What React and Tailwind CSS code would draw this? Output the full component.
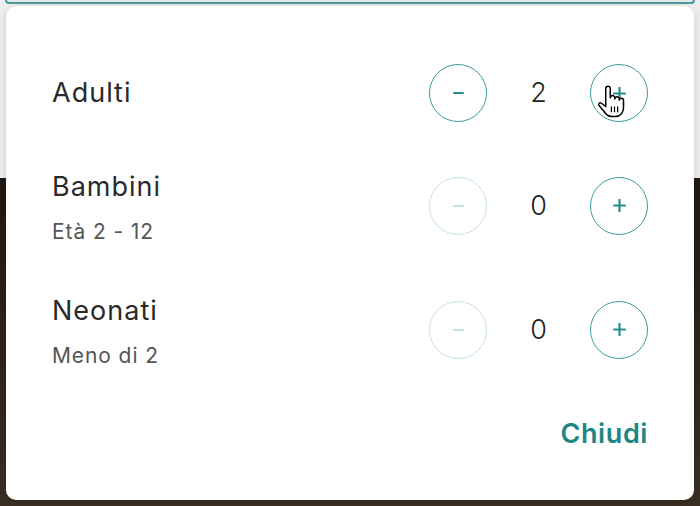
import React from "react";

function Minus({ disabled }) {
  return (
    <div
      className={
        "flex h-[58px] w-[58px] items-center justify-center rounded-full border-[1.5px] " +
        (disabled ? "border-[#c6e3e3]" : "border-[#3b9c9c]")
      }
    >
      <div className={"h-[2px] w-[11px] rounded " + (disabled ? "bg-[#c3e0e0]" : "bg-[#2a8d8d]")} />
    </div>
  );
}

function Plus() {
  return (
    <div className="flex h-[58px] w-[58px] items-center justify-center rounded-full border-[1.5px] border-[#3b9c9c]">
      <svg width="13" height="13" viewBox="0 0 13 13">
        <path d="M6.5 1v11M1 6.5h11" stroke="#2a8d8d" strokeWidth="2.2" strokeLinecap="round" />
      </svg>
    </div>
  );
}

function Counter({ value, disabled }) {
  return (
    <div className="flex items-center">
      <Minus disabled={disabled} />
      <div className="w-[103px] text-center text-[27px] font-light leading-[36px] text-[#222]">{value}</div>
      <Plus />
    </div>
  );
}

function Row({ label, sub, value, disabled, className }) {
  return (
    <div className={"flex items-center justify-between " + className}>
      <div className={"flex flex-col " + (sub ? "pt-[7px]" : "")}>
        <div className="text-[27px] leading-[36px] tracking-[1px] text-[#2a2a2a]">{label}</div>
        {sub && (
          <div className="mt-[9px] text-[21px] leading-[36px] tracking-[0.9px] text-[#555]">{sub}</div>
        )}
      </div>
      <Counter value={value} disabled={disabled} />
    </div>
  );
}

export default function App() {
  return (
    <div
      className="relative h-[506px] w-[700px] overflow-hidden bg-[linear-gradient(180deg,#0f0d0a_0%,#2a2218_60%,#3a2f22_100%)]"
      style={{ fontFamily: "Inter, 'Noto Sans', sans-serif" }}
    >
      <div className="h-[178px] bg-[#efefef]">
        <div className="mx-[5px] h-[4px] rounded-b-[6px] border-2 border-t-0 border-[#4a9c9c] bg-[#e8eaea]" />
      </div>

      <div className="absolute left-[6px] top-[6px] flex h-[494px] w-[688px] flex-col rounded-[10px] bg-white px-[46px] pt-[58px] shadow-[0_2px_10px_rgba(0,0,0,0.15)]">
        <Row label="Adulti" value="2" className="h-[58px]" />
        <Row label="Bambini" sub="Età 2 - 12" value="0" disabled className="mt-[40px] h-[87px]" />
        <Row label="Neonati" sub="Meno di 2" value="0" disabled className="mt-[37px] h-[87px]" />
        <div className="mt-[44px] flex justify-end">
          <span className="text-[27px] font-semibold leading-[34px] tracking-[0.6px] text-[#1d8787]">Chiudi</span>
        </div>
      </div>

      <svg
        className="absolute left-[597px] top-[84px]"
        width="30"
        height="35"
        viewBox="0 0 24 28"
      >
        <path
          d="M7 18V3.5a1.8 1.8 0 0 1 3.6 0V11a1.8 1.8 0 0 1 3.6 0V12a1.8 1.8 0 0 1 3.6 0V13a1.7 1.7 0 0 1 3.4 0V19c0 4-2.5 7-6.5 7h-3c-3 0-4.5-1.5-6-4L1.5 17c-.8-1.2.8-2.6 2-1.6L7 18Z"
          fill="#fff"
          stroke="#000"
          strokeWidth="1.2"
          strokeLinejoin="round"
        />
        <path d="M11.5 18v4.5M14 18v4.5M16.5 18v4.5" stroke="#000" strokeWidth="1" />
      </svg>
    </div>
  );
}
